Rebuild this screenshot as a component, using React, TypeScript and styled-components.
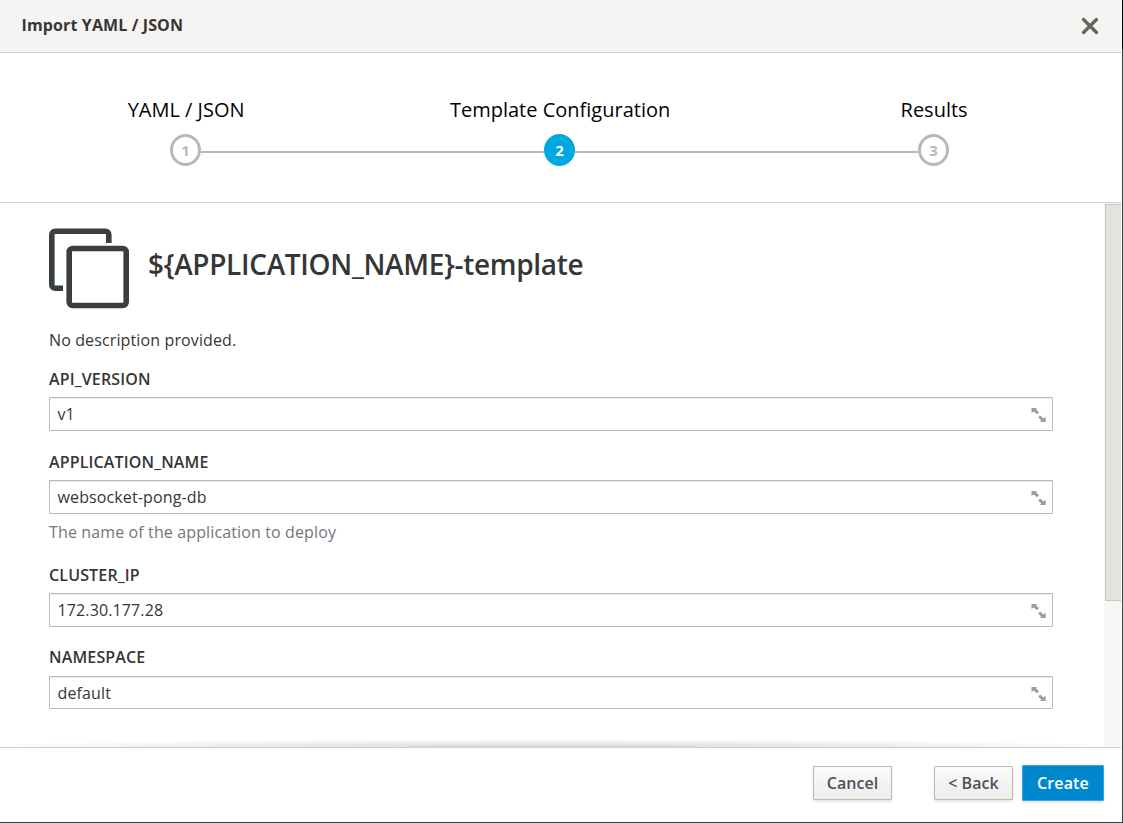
import React from "react";
import styled, { createGlobalStyle } from "styled-components";

const GlobalStyle = createGlobalStyle`
  *, *::before, *::after { box-sizing: border-box; }
  body {
    margin: 0;
    background: #fff;
    color: #363636;
    font-family: "Open Sans", "Noto Sans", sans-serif;
    font-size: 16px;
    line-height: 24px;
    letter-spacing: 0.125px;
  }
`;

const Dialog = styled.div`
  display: flex;
  flex-direction: column;
  width: 1123px;
  height: 823px;
  overflow: hidden;
  border-right: 1px solid #3d3f40;
  border-bottom: 1px solid #3d3f40;
`;

const Header = styled.header`
  display: flex;
  flex: none;
  align-items: center;
  justify-content: space-between;
  height: 53px;
  padding: 0 22px 2px 21.5px;
  background: #f5f4f2;
  border-bottom: 1px solid #d1d0cb;
  margin-right: 1px;
`;

const Title = styled.h1`
  margin: 0;
  font-size: 16px;
  font-weight: 700;
  line-height: 24px;
`;

const CloseButton = styled.button`
  display: flex;
  padding: 1px 0 0;
  border: 0;
  background: none;
`;

const Steps = styled.ol`
  display: flex;
  flex: none;
  height: 150px;
  margin: 0 1px 0 0;
  padding: 43px 0 0;
  list-style: none;
  border-bottom: 1px solid #d1d1d1;
`;

const Step = styled.li`
  display: flex;
  flex: none;
  flex-direction: column;
  align-items: center;
  width: 374px;
  color: #030303;
  &:first-child { margin-left: -1.5px; }
`;

const StepLabel = styled.span`
  height: 38px;
  padding-left: 1.2px;
  font-size: 20px;
  line-height: 27px;
  letter-spacing: 0;
  white-space: nowrap;
`;

const StepTrack = styled.div<{ $first?: boolean; $last?: boolean }>`
  display: flex;
  width: 100%;
  align-items: center;
  &::before, &::after {
    content: "";
    flex: 1;
    height: 2px;
    margin-top: 4px;
    background: #bbb8b2;
  }
  &::before { visibility: ${(p) => (p.$first ? "hidden" : "visible")}; }
  &::after { visibility: ${(p) => (p.$last ? "hidden" : "visible")}; }
`;

const StepNumber = styled.span<{ $active?: boolean }>`
  display: flex;
  align-items: center;
  justify-content: center;
  width: 31px;
  height: 32px;
  border: ${(p) => (p.$active ? "3px solid #00a8e1" : "3px solid #bbb8b2")};
  border-radius: 50%;
  background: ${(p) => (p.$active ? "#00a8e1" : "#fff")};
  color: ${(p) => (p.$active ? "#fff" : "#bbb8b2")};
  font-size: 15px;
  font-weight: 700;
`;

const Body = styled.main`
  position: relative;
  display: flex;
  flex: 1;
  min-height: 0;
  margin-right: 1px;
  justify-content: space-between;
`;

const Form = styled.form`
  width: 1053px;
  padding: 25px 0 0 49px;
`;

const TemplateHeading = styled.div`
  display: flex;
  height: 80px;
  gap: 19px;
`;

const TemplateName = styled.h2`
  margin: 0;
  padding-top: 16px;
  font-size: 28px;
  font-weight: 600;
  letter-spacing: -0.32px;
  line-height: 40px;
  white-space: nowrap;
`;

const Description = styled.p`
  margin: 20px 0 15px;
  line-height: 24px;
`;

const Field = styled.div<{ $height: number }>`
  height: ${(p) => p.$height}px;
`;

const Label = styled.label`
  display: block;
  height: 30px;
  font-size: 16px;
  font-weight: 600;
  line-height: 24px;
  letter-spacing: 0.15px;
`;

const InputBox = styled.div<{ $height?: number; $offset?: number }>`
  display: flex;
  align-items: center;
  justify-content: space-between;
  height: ${(p) => p.$height ?? 34}px;
  margin-top: ${(p) => p.$offset ?? 0}px;
  padding: 0 6px 0 7.5px;
  border: 1px solid #bbb8b2;
  border-radius: 1px;
  box-shadow: inset 0 1px 1px rgba(3, 3, 3, 0.075);
`;

const Hint = styled.p`
  margin: 6px 0 0;
  color: #72767b;
`;

const Scrollbar = styled.div`
  width: 17px;
  padding: 1px 0 0 1px;
  background: #f7f6f5;
`;

const Thumb = styled.div`
  height: 397px;
  background: #e4e3e0;
  border: 1px solid #cbc8c3;
  border-right: 0;
`;

const ScrollShadow = styled.div`
  position: absolute;
  left: 0;
  bottom: 0;
  width: 1104px;
  height: 7px;
  background: radial-gradient(ellipse 54% 110% at 50% 100%, rgba(135, 130, 120, 0.34), rgba(135, 130, 120, 0));
`;

const Footer = styled.footer`
  display: flex;
  flex: none;
  align-items: center;
  justify-content: flex-end;
  height: 75px;
  margin-right: 1px;
  padding: 0 17px 4px 0;
  border-top: 1px solid #d1d0cb;
`;

const Button = styled.button<{ $primary?: boolean; $gap?: number }>`
  width: ${(p) => (p.$primary ? 82 : 79)}px;
  height: ${(p) => (p.$primary ? 36 : 34)}px;
  margin: 0 ${(p) => p.$gap ?? 0}px 0 0;
  padding: 0;
  border: 1px solid ${(p) => (p.$primary ? "#39a5ec" : "#bbb8b2")};
  border-radius: 1px;
  background: ${(p) => (p.$primary ? "#0088ce" : "linear-gradient(#fafafa, #ededec)")};
  box-shadow: 0 2px 3px rgba(3, 3, 3, 0.1);
  color: ${(p) => (p.$primary ? "#fff" : "#4d5258")};
  font-family: inherit;
  font-size: 16px;
  font-weight: 600;
  line-height: 24px;
  letter-spacing: ${(p) => (p.$primary ? 0.12 : 0.05)}px;
  white-space: nowrap;
`;

const WindowEdge = styled.div`
  position: absolute;
  top: 0;
  left: 1122px;
  width: 1px;
  height: 49px;
  background: #000;
`;

const CloseIcon = () => (
  <svg width="18" height="18" viewBox="0 0 18 18" fill="none" stroke="#66645f" strokeWidth="3.2" strokeLinecap="round">
    <path d="M2.5 2.5 15.5 15.5M15.5 2.5 2.5 15.5" />
  </svg>
);

const CloneIcon = () => (
  <svg width="80" height="81" viewBox="0 0 80 81" fill="none" stroke="#393f3e" strokeWidth="5.6">
    <path d="M59.8 15V6.7a3.4 3.4 0 0 0-3.4-3.4H6.2a3.4 3.4 0 0 0-3.4 3.4V56.9a3.4 3.4 0 0 0 3.4 3.4H14" />
    <rect x="20.2" y="20.5" width="57" height="57" rx="3.4" />
  </svg>
);

const ExpandIcon = () => (
  <svg width="15" height="16" viewBox="0 0 15 16" fill="#a09c96">
    <path d="M.5 2H6L5 3.3 8 6.3 6 8.3 2.8 5.4 .5 7zM14.7 16H9l1.2-1.5L7.2 11.5 9.2 9.4l3.2 3 2.3-1.6z" />
  </svg>
);

interface Parameter {
  name: string;
  value: string;
  hint?: string;
  space: number;
  inputHeight?: number;
  inputOffset?: number;
}

const parameters: Parameter[] = [
  { name: "API_VERSION", value: "v1", space: 83 },
  { name: "APPLICATION_NAME", value: "websocket-pong-db", hint: "The name of the application to deploy", space: 113 },
  { name: "CLUSTER_IP", value: "172.30.177.28", space: 82 },
  { name: "NAMESPACE", value: "default", space: 80, inputHeight: 33, inputOffset: 1 },
];

export default function App() {
  return (
    <>
      <GlobalStyle />
      <Dialog>
        <Header>
          <Title>Import YAML / JSON</Title>
          <CloseButton aria-label="Close"><CloseIcon /></CloseButton>
        </Header>
        <Steps>
          <Step>
            <StepLabel>YAML / JSON</StepLabel>
            <StepTrack $first><StepNumber>1</StepNumber></StepTrack>
          </Step>
          <Step>
            <StepLabel>Template Configuration</StepLabel>
            <StepTrack><StepNumber $active>2</StepNumber></StepTrack>
          </Step>
          <Step>
            <StepLabel>Results</StepLabel>
            <StepTrack $last><StepNumber>3</StepNumber></StepTrack>
          </Step>
        </Steps>
        <Body>
          <Form>
            <TemplateHeading>
              <CloneIcon />
              <TemplateName>{"${APPLICATION_NAME}-template"}</TemplateName>
            </TemplateHeading>
            <Description>No description provided.</Description>
            {parameters.map((p) => (
              <Field key={p.name} $height={p.space}>
                <Label>{p.name}</Label>
                <InputBox $height={p.inputHeight} $offset={p.inputOffset}>
                  <span>{p.value}</span>
                  <ExpandIcon />
                </InputBox>
                {p.hint && <Hint>{p.hint}</Hint>}
              </Field>
            ))}
          </Form>
          <Scrollbar><Thumb /></Scrollbar>
          <ScrollShadow />
        </Body>
        <Footer>
          <Button $gap={42}>Cancel</Button>
          <Button $gap={9}>&lt; Back</Button>
          <Button $primary>Create</Button>
        </Footer>
      </Dialog>
      <WindowEdge />
    </>
  );
}
